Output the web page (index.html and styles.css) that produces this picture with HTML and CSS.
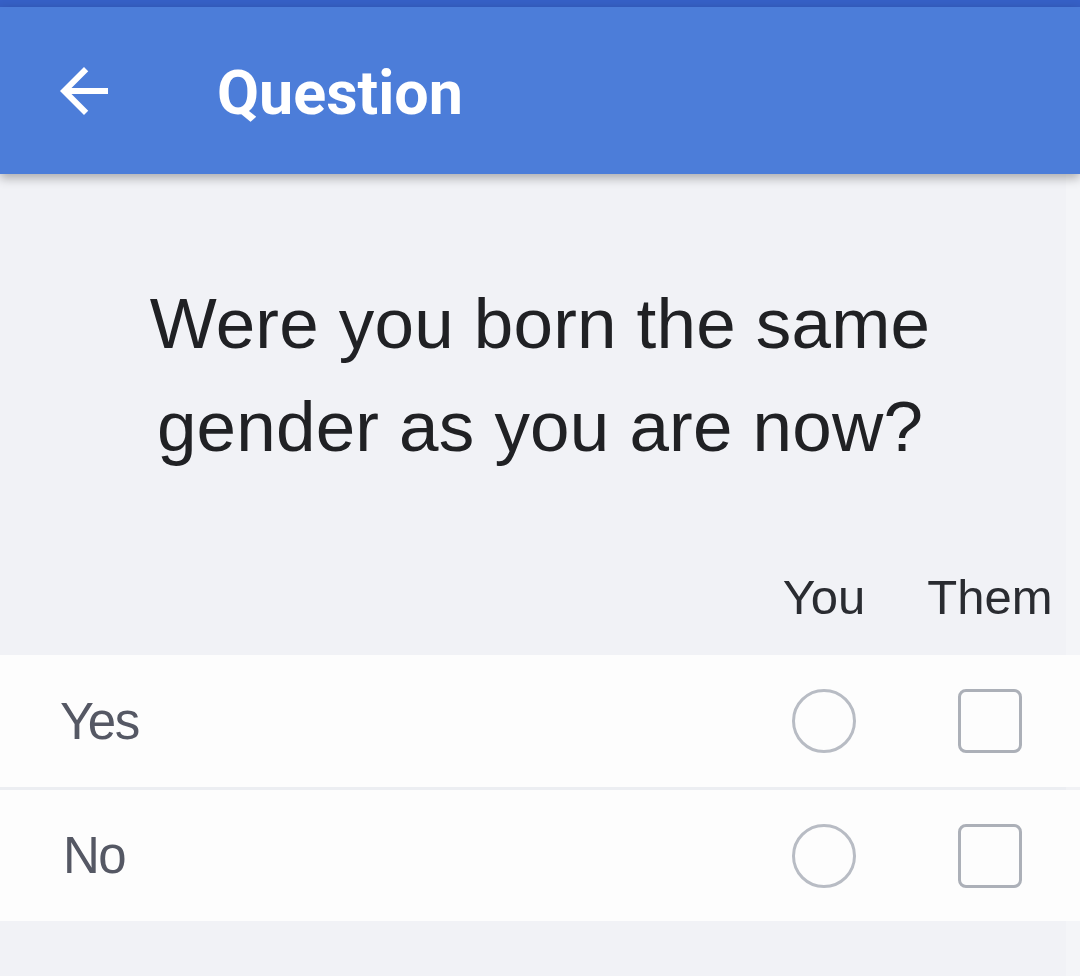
FILE: index.html
```html
<!DOCTYPE html>
<html lang="en">
<head>
<meta charset="utf-8">
<title>Question</title>
<link rel="stylesheet" href="styles.css">
</head>
<body>
<div class="statusbar"></div>
<header class="appbar">
  <button class="back" aria-label="Back">
    <svg viewBox="0 0 24 24" width="72" height="72"><path fill="#ffffff" d="M20 11H7.83l5.59-5.59L12 4l-8 8 8 8 1.41-1.41L7.83 13H20v-2z"/></svg>
  </button>
  <h1 class="title">Question</h1>
</header>
<main class="content">
  <p class="question">Were you born the same<br>gender as you are now?</p>
  <div class="colhead">
    <span></span>
    <span class="col">You</span>
    <span class="col">Them</span>
  </div>
  <div class="answers">
    <div class="row">
      <span class="label">Yes</span>
      <span class="cell"><span class="radio"></span></span>
      <span class="cell"><span class="check"></span></span>
    </div>
    <div class="row">
      <span class="label label-no">No</span>
      <span class="cell"><span class="radio"></span></span>
      <span class="cell"><span class="check"></span></span>
    </div>
  </div>
</main>
<div class="scrolltrack"></div>
</body>
</html>
```
FILE: styles.css
```css
html, body {
  margin: 0;
  padding: 0;
}
body {
  width: 1080px;
  height: 976px;
  overflow: hidden;
  background: #f1f2f6;
  font-family: "Liberation Sans", Arial, sans-serif;
  position: relative;
}
.statusbar {
  height: 7px;
  background: #3660c6;
}
.appbar {
  height: 167px;
  background: #4c7dd9;
  display: flex;
  align-items: center;
  box-shadow: 0 4px 10px rgba(0,0,0,0.3);
  position: relative;
  z-index: 2;
}
.back {
  margin: 0 0 0 48px;
  padding: 0;
  border: 0;
  background: none;
  width: 72px;
  height: 72px;
  display: block;
}
.back svg {
  display: block;
}
.title {
  margin: 0 0 0 97px;
  color: #ffffff;
  font-family: Roboto, "Liberation Sans", Arial, sans-serif;
  font-size: 61px;
  font-weight: bold;
  line-height: 1;
  position: relative;
  top: 3px;
}
.content {
  display: flex;
  flex-direction: column;
}
.question {
  margin: 98px 0 0;
  text-align: center;
  font-size: 71px;
  line-height: 103px;
  color: #202124;
  letter-spacing: 0.2px;
}
.colhead {
  margin-top: 89px;
  height: 88px;
  display: grid;
  grid-template-columns: 1fr 166px 166px;
  padding-right: 7px;
  font-size: 49px;
  line-height: 60px;
  color: #2a2c31;
}
.col {
  text-align: center;
}
.answers {
  background: #fdfdfd;
}
.row {
  display: grid;
  grid-template-columns: 1fr 166px 166px;
  padding: 0 7px 0 60px;
  height: 132px;
  align-items: center;
}
.row + .row {
  border-top: 3px solid #eceef2;
  height: 131px;
}
.label {
  font-size: 51px;
  letter-spacing: -1.5px;
  color: #555864;
}
.label-no {
  padding-left: 3px;
}
.cell {
  display: flex;
  justify-content: center;
}
.radio {
  width: 58px;
  height: 58px;
  border: 3px solid #b8bcc4;
  border-radius: 50%;
  box-sizing: content-box;
}
.check {
  width: 58px;
  height: 58px;
  border: 3px solid #acb0b8;
  border-radius: 8px;
  box-sizing: content-box;
}
.scrolltrack {
  position: absolute;
  top: 174px;
  right: 0;
  width: 14px;
  bottom: 0;
  background: rgba(255,255,255,0.25);
}
```
